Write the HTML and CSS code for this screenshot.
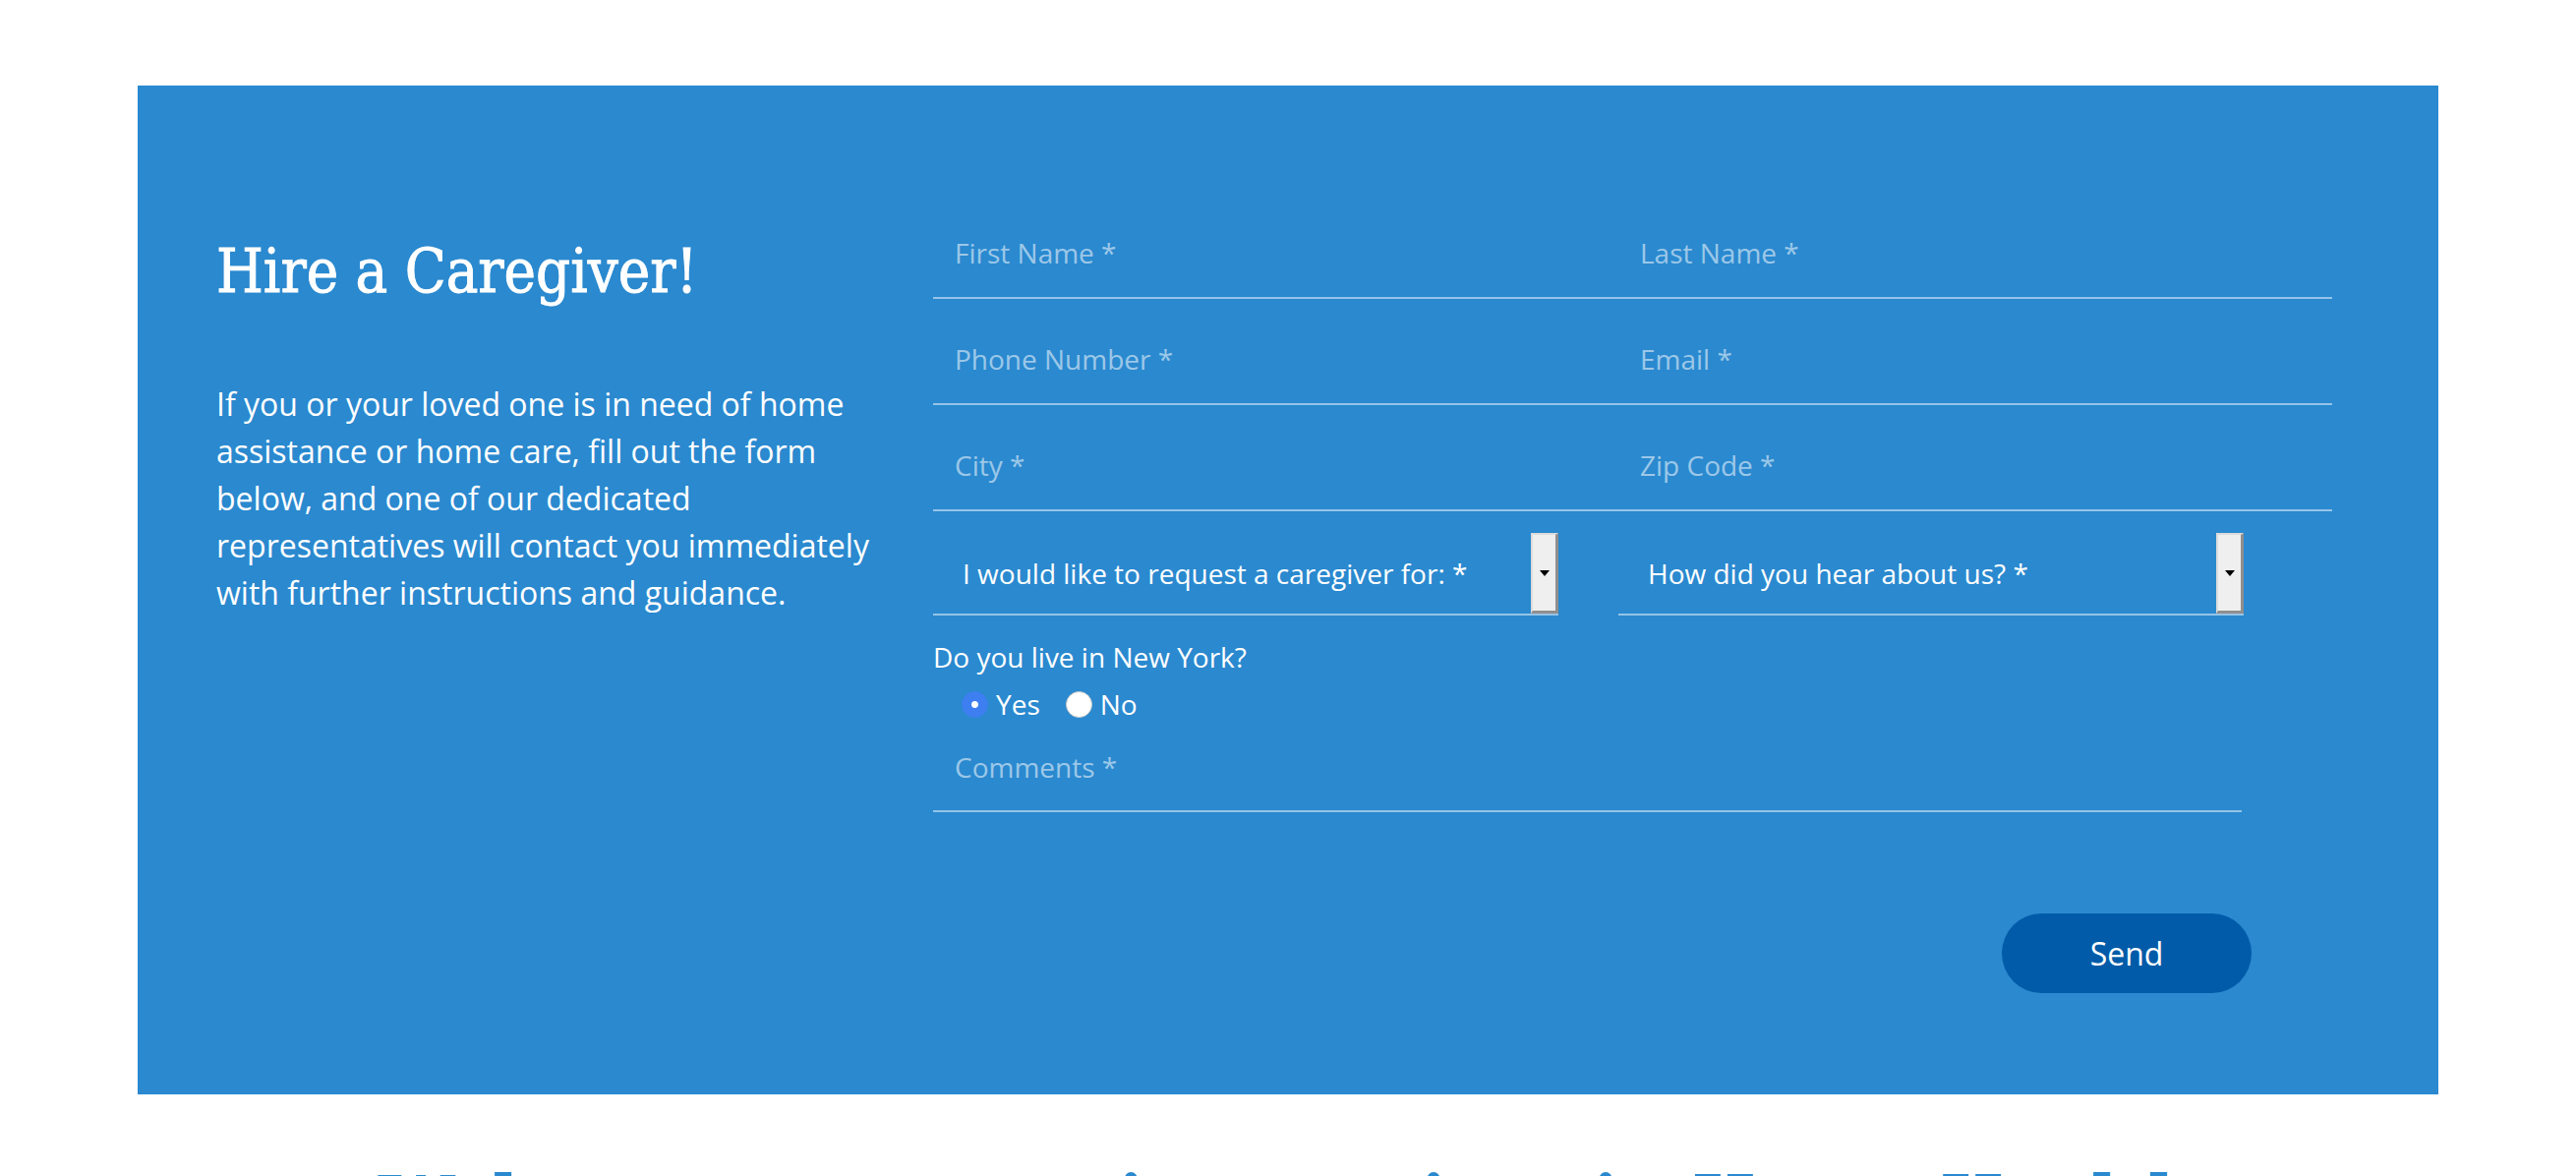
FILE: index.html
```html
<!DOCTYPE html>
<html lang="en">
<head>
    <meta charset="UTF-8">
    <meta name="viewport" content="width=device-width, initial-scale=1.0">
    <title>Hire a Caregiver</title>
    <link rel="stylesheet" href="styles.css">
</head>
<body>
    <section class="hire">
        <!-- Intro text -->
        <div class="hire-intro">
            <h2 class="hire-title">Hire a Caregiver!</h2>
            <p class="hire-text">If you or your loved one is in need of home assistance or home care, fill out the form below, and one of our dedicated representatives will contact you immediately with further instructions and guidance.</p>
        </div>

        <!-- Request form -->
        <form class="hire-form" onsubmit="return false;">
            <div class="form-grid">
                <input class="field" type="text" placeholder="First Name *">
                <input class="field" type="text" placeholder="Last Name *">
                <input class="field" type="text" placeholder="Phone Number *">
                <input class="field" type="text" placeholder="Email *">
                <input class="field" type="text" placeholder="City *">
                <input class="field" type="text" placeholder="Zip Code *">
                <div class="select">
                    <span class="select-label">I would like to request a caregiver for: *</span>
                    <span class="select-btn"></span>
                </div>
                <div class="select">
                    <span class="select-label">How did you hear about us? *</span>
                    <span class="select-btn"></span>
                </div>
            </div>

            <div class="question">Do you live in New York?</div>
            <div class="radios">
                <label class="radio"><input type="radio" name="ny" checked>Yes</label>
                <label class="radio"><input type="radio" name="ny">No</label>
            </div>

            <textarea class="comments" placeholder="Comments *"></textarea>

            <div class="actions">
                <button class="send" type="submit">Send</button>
            </div>
        </form>
    </section>

    <h2 class="welcome">Welcome to our caring services in Home Health</h2>
</body>
</html>
```

FILE: styles.css
```css
body {
    margin: 0;
    padding: 0;
    background-color: #fff;
    font-family: "Open Sans", "Noto Sans", sans-serif;
    color: #fff;
}

.hire {
    display: grid;
    grid-template-columns: 729px 1423px;
    margin: 87px 140px 0;
    padding: 125px 108px 103px 80px;
    background-color: #2a89cf;
}

.hire-title {
    margin: 29px 0 0;
    font-family: "DejaVu Serif Condensed", "DejaVu Serif", serif;
    font-size: 61px;
    font-weight: normal;
    line-height: 70px;
    -webkit-text-stroke: 0.9px #fff;
}

.hire-text {
    max-width: 680px;
    margin: 76px 0 0;
    font-size: 32px;
    line-height: 48px;
}

.form-grid {
    display: grid;
    grid-template-columns: 697px 726px;
    row-gap: 16px;
}

.field {
    height: 92px;
    box-sizing: border-box;
    padding: 0 22px;
    border: 0;
    border-bottom: 2px solid rgba(255, 255, 255, 0.5);
    background: transparent;
    font-family: inherit;
    font-size: 28px;
    color: #fff;
    outline: none;
}

.field::placeholder,
.comments::placeholder {
    color: rgba(255, 255, 255, 0.55);
}

.select {
    display: flex;
    width: 636px;
    height: 84px;
    box-sizing: border-box;
    margin-top: 6px;
    border-bottom: 2px solid rgba(255, 255, 255, 0.5);
    font-size: 28px;
}

.select-label {
    flex: 1;
    display: flex;
    align-items: center;
    padding-left: 30px;
}

.select-btn {
    display: flex;
    align-items: center;
    justify-content: center;
    width: 28px;
    box-sizing: border-box;
    background-color: #efefef;
    border-top: 2px solid #dcdcdc;
    border-left: 2px solid #dcdcdc;
    border-right: 3px solid #8f8f8f;
    border-bottom: 3px solid #8f8f8f;
}

.select-btn::after {
    content: "";
    border-left: 5px solid transparent;
    border-right: 5px solid transparent;
    border-top: 6px solid #000;
}

.question {
    margin-top: 23px;
    font-size: 28px;
}

.radios {
    display: flex;
    gap: 26px;
    margin-top: 10px;
    padding-left: 29px;
    font-size: 28px;
}

.radio {
    display: flex;
    align-items: center;
    gap: 8px;
}

.radio input {
    appearance: none;
    width: 27px;
    height: 27px;
    margin: 0;
    border-radius: 50%;
    background-color: #fff;
    border: 1px solid #c9c9c9;
}

.radio input:checked {
    border-color: #3d7ff0;
    background: radial-gradient(circle, #fff 0 3px, #3d7ff0 4px);
}

.comments {
    display: block;
    width: 1331px;
    height: 85px;
    box-sizing: border-box;
    margin-top: 6px;
    padding: 20px 22px 0;
    border: 0;
    border-bottom: 2px solid rgba(255, 255, 255, 0.5);
    background: transparent;
    font-family: inherit;
    font-size: 28px;
    line-height: normal;
    color: #fff;
    resize: none;
    outline: none;
}

.actions {
    display: flex;
    justify-content: flex-end;
    margin-top: 103px;
    padding-right: 82px;
}

.send {
    width: 254px;
    height: 81px;
    border: 0;
    border-radius: 41px;
    background-color: #015ba8;
    font-family: inherit;
    font-size: 32px;
    color: #fff;
    cursor: pointer;
}

.welcome {
    margin: 68px 0 0;
    text-align: center;
    font-family: "DejaVu Serif", serif;
    font-size: 69px;
    font-weight: bold;
    line-height: 80px;
    color: #2a89cf;
}
```
